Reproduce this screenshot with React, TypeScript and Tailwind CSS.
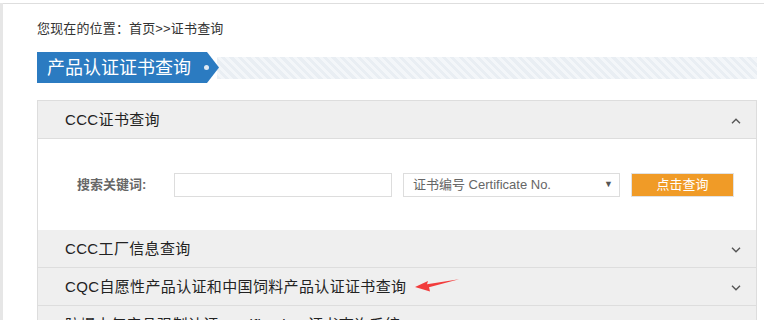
import React from 'react';

const font = "font-['Liberation_Sans','Noto_Sans_CJK_SC',sans-serif]";

const ChevronUp = () => (
  <svg width="10" height="6" viewBox="0 0 10 6" fill="none" stroke="#555" strokeWidth="1.4">
    <path d="M1 5.2 L5 1.2 L9 5.2" />
  </svg>
);

const ChevronDown = () => (
  <svg width="10" height="6" viewBox="0 0 10 6" fill="none" stroke="#555" strokeWidth="1.4">
    <path d="M1 0.8 L5 4.8 L9 0.8" />
  </svg>
);

const Header: React.FC<{ label: string; open?: boolean; children?: React.ReactNode }> = ({ label, open, children }) => (
  <div className="relative h-[38px] bg-[#efefef] border-b border-[#dddddd] flex items-center justify-between pt-[2px] pl-[27px] pr-[15px]">
    <span className="text-[15px] text-[#222] tracking-[0.35px]">{label}</span>
    {open ? <ChevronUp /> : <ChevronDown />}
    {children}
  </div>
);

export default function App() {
  return (
    <div className={`w-[764px] h-[320px] overflow-hidden bg-white ${font}`}>
      <div className="h-[3px] ml-[3px] bg-white" />
      <div className="flex h-[317px]">
        <div className="w-[3px] bg-[#e6e6e6]" />
        <div className="flex-1 border-t border-[#dedede] pl-[34px] pr-[7px]">
          {/* breadcrumb */}
          <div className="pt-[15px] h-[35px] leading-5 text-[13px] text-[#333] tracking-[0.15px]">
            您现在的位置：首页&gt;&gt;证书查询
          </div>

          {/* title */}
          <div className="mt-[13px] flex items-center">
            <div className="relative z-10 w-[182px] h-[31px] bg-[#2b7bc1] [clip-path:polygon(0_0,170px_0,100%_50%,170px_100%,0_100%)] flex items-center pl-[10px]">
              <span className="text-[18px] text-white leading-none">产品认证证书查询</span>
              <span className="absolute left-[167px] top-[13px] w-[5px] h-[5px] rounded-full bg-[#dfe9f3]" />
            </div>
            <div className="-ml-[2px] flex-1 h-[22px] bg-[repeating-linear-gradient(45deg,#e9eef3_0,#e9eef3_3px,#f3f6f9_3px,#f3f6f9_6px)]" />
          </div>

          {/* accordion */}
          <div className="mt-[17px] border border-[#dddddd] border-b-0">
            <Header label="CCC证书查询" open />
            <div className="h-[91px] bg-white flex items-center pl-[39px]">
              <span className="w-[97px] text-[13px] font-bold text-[#666]">搜索关键词:</span>
              <input className="w-[218px] h-[24px] border border-[#dddddd] outline-none" />
              <div className="ml-[11px] w-[217px] h-[24px] border border-[#dddddd] flex items-center justify-between pl-[9px] pr-[6px]">
                <span className="text-[13px] text-[#666]">证书编号 Certificate No.</span>
                <span className="text-[9px] text-[#555]">▼</span>
              </div>
              <button className="ml-[11px] w-[103px] h-[24px] border border-[#e2e2e2] bg-[#f09b27] text-white text-[13px]">
                点击查询
              </button>
            </div>
            <Header label="CCC工厂信息查询" />
            <Header label="CQC自愿性产品认证和中国饲料产品认证证书查询">
              <svg
                className="absolute left-[377px] top-[10px]"
                width="44"
                height="14"
                viewBox="0 0 44 14"
              >
                <polygon points="0,9 13,3 12,6.3 44,1.2 14,9.2 15,13.5" fill="#f23c3c" />
              </svg>
            </Header>
            <Header label="防爆电气产品强制认证 certification 证书查询系统" />
          </div>
        </div>
      </div>
    </div>
  );
}
